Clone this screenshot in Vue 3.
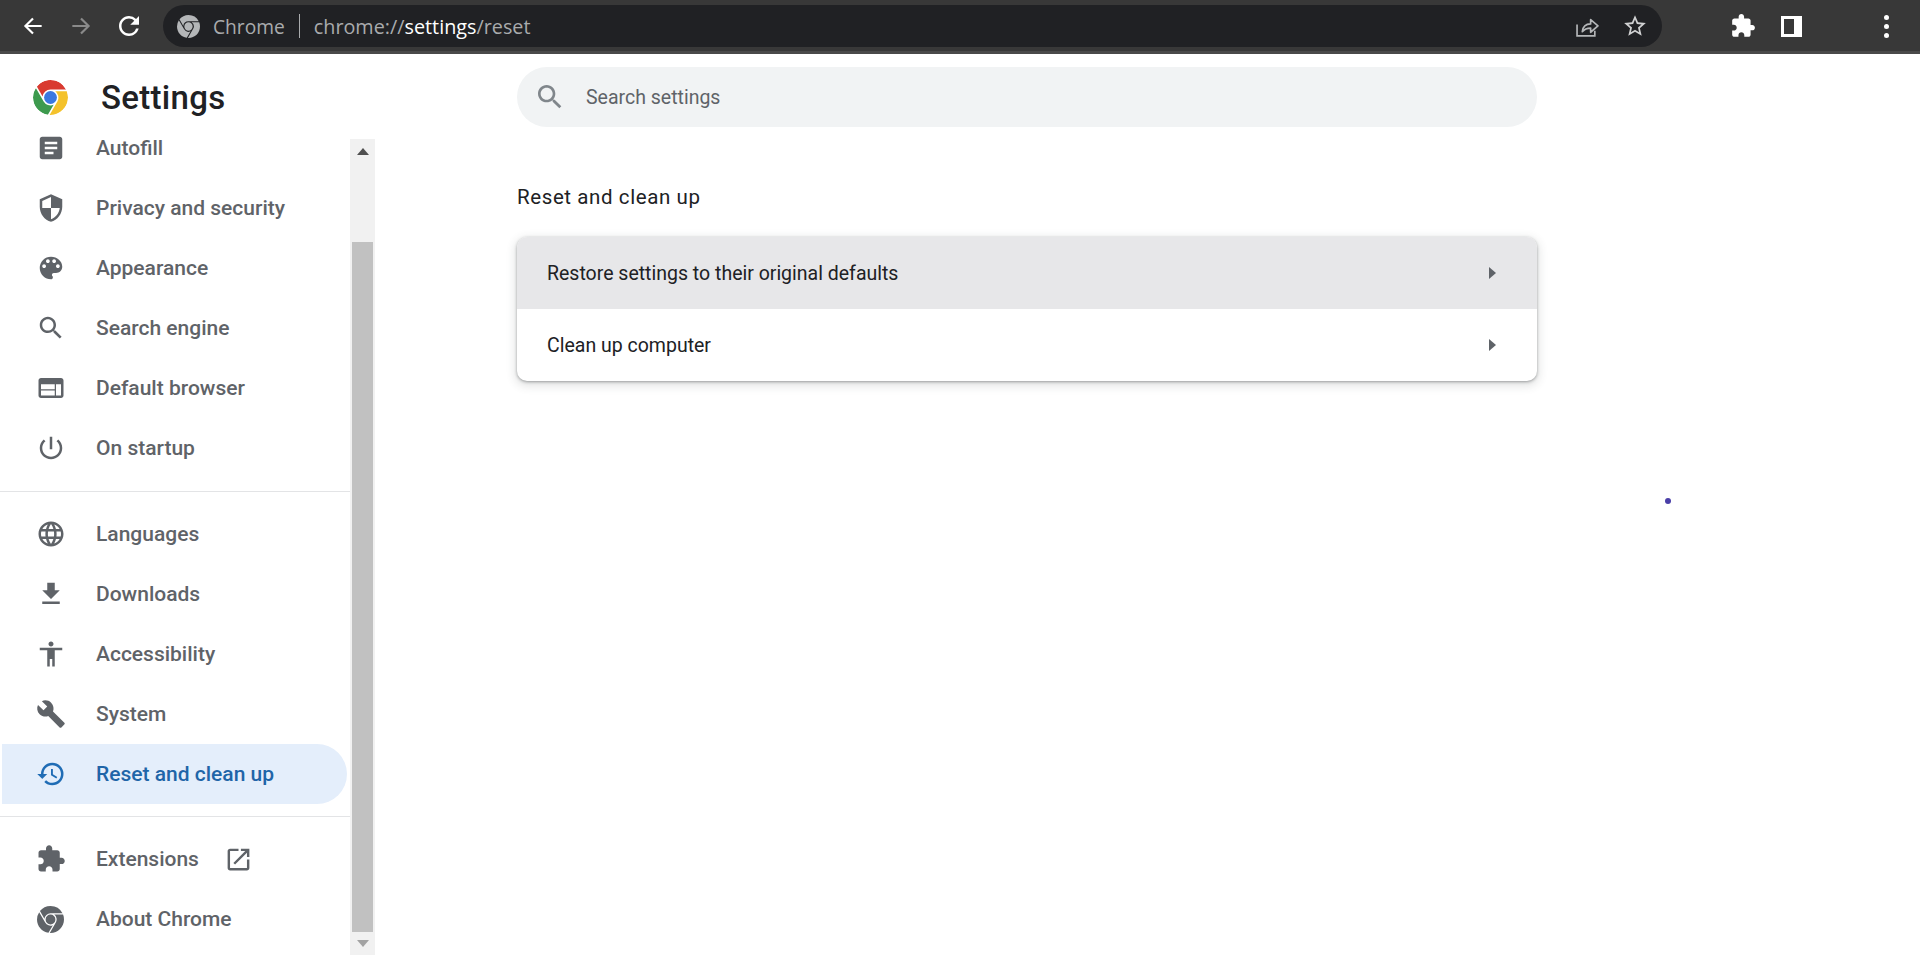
<script setup>
const P = {
  autofill: 'M19 3H5c-1.1 0-2 .9-2 2v14c0 1.1.9 2 2 2h14c1.1 0 2-.9 2-2V5c0-1.1-.9-2-2-2zm-5 14H7v-2h7v2zm3-4H7v-2h10v2zm0-4H7V7h10v2z',
  shield: 'M12 1L3 5v6c0 5.55 3.84 10.74 9 12 5.16-1.26 9-6.45 9-12V5l-9-4zm0 10.99h7c-.53 4.12-3.28 7.79-7 8.94V12H5V6.3l7-3.11v8.8z',
  palette: 'M12 3a9 9 0 0 0 0 18c.83 0 1.5-.67 1.5-1.5 0-.39-.15-.74-.39-1.01-.23-.26-.38-.61-.38-.99 0-.83.67-1.5 1.5-1.5H16c2.76 0 5-2.24 5-5 0-4.42-4.03-8-9-8zm-5.5 9c-.83 0-1.5-.67-1.5-1.5S5.67 9 6.5 9 8 9.67 8 10.5 7.33 12 6.5 12zm3-4C8.67 8 8 7.33 8 6.5S8.67 5 9.5 5s1.5.67 1.5 1.5S10.33 8 9.5 8zm5 0c-.83 0-1.5-.67-1.5-1.5S13.67 5 14.5 5s1.5.67 1.5 1.5S15.33 8 14.5 8zm3 4c-.83 0-1.5-.67-1.5-1.5S16.67 9 17.5 9s1.5.67 1.5 1.5-.67 1.5-1.5 1.5z',
  search: 'M15.5 14h-.79l-.28-.27C15.41 12.59 16 11.11 16 9.5 16 5.91 13.09 3 9.5 3S3 5.91 3 9.5 5.91 16 9.5 16c1.61 0 3.09-.59 4.23-1.57l.27.28v.79l5 4.99L20.49 19l-4.99-5zm-6 0C7.01 14 5 11.99 5 9.5S7.01 5 9.5 5 14 7.01 14 9.5 11.99 14 9.5 14z',
  web: 'M20 4H4c-1.1 0-1.99.9-1.99 2L2 18c0 1.1.9 2 2 2h16c1.1 0 2-.9 2-2V6c0-1.1-.9-2-2-2zm-5 14H4v-4h11v4zm0-5H4V9h11v4zm5 5h-4V9h4v9z',
  power: 'M13 3h-2v10h2V3zm4.83 2.17l-1.42 1.42C17.99 7.86 19 9.81 19 12c0 3.87-3.13 7-7 7s-7-3.13-7-7c0-2.19 1.01-4.14 2.58-5.42L6.17 5.17C4.23 6.82 3 9.26 3 12c0 4.97 4.03 9 9 9s9-4.03 9-9c0-2.74-1.23-5.18-3.17-6.83z',
  language: 'M11.99 2C6.47 2 2 6.48 2 12s4.47 10 9.99 10C17.52 22 22 17.52 22 12S17.52 2 11.99 2zm6.93 6h-2.95c-.32-1.25-.78-2.45-1.38-3.56 1.84.63 3.37 1.91 4.33 3.56zM12 4.04c.83 1.2 1.48 2.53 1.91 3.96h-3.82c.43-1.43 1.08-2.76 1.91-3.96zM4.26 14C4.1 13.36 4 12.69 4 12s.1-1.36.26-2h3.38c-.08.66-.14 1.32-.14 2 0 .68.06 1.34.14 2H4.26zm.82 2h2.95c.32 1.25.78 2.45 1.38 3.56-1.84-.63-3.37-1.9-4.33-3.56zm2.95-8H5.08c.96-1.66 2.49-2.93 4.33-3.56C8.81 5.55 8.35 6.75 8.03 8zM12 19.96c-.83-1.2-1.48-2.53-1.91-3.96h3.82c-.43 1.43-1.08 2.76-1.91 3.96zM14.34 14H9.66c-.09-.66-.16-1.32-.16-2 0-.68.07-1.35.16-2h4.68c.09.65.16 1.32.16 2 0 .68-.07 1.34-.16 2zm.25 5.56c.6-1.11 1.06-2.31 1.38-3.56h2.95c-.96 1.65-2.49 2.93-4.33 3.56zM16.36 14c.08-.66.14-1.32.14-2 0-.68-.06-1.34-.14-2h3.38c.16.64.26 1.31.26 2s-.1 1.36-.26 2h-3.38z',
  download: 'M19 9h-4V3H9v6H5l7 7 7-7zM5 18v2h14v-2H5z',
  access: 'M12 2c1.1 0 2 .9 2 2s-.9 2-2 2-2-.9-2-2 .9-2 2-2zm9 7h-6v13h-2v-6h-2v6H9V9H3V7h18v2z',
  build: 'M22.7 19l-9.1-9.1c.9-2.3.4-5-1.5-6.9-2-2-5-2.4-7.4-1.3L9 6 6 9 1.6 4.7C.4 7.1.9 10.1 2.9 12.1c1.9 1.9 4.6 2.4 6.9 1.5l9.1 9.1c.4.4 1 .4 1.4 0l2.3-2.3c.5-.4.5-1.1.1-1.4z',
  history: 'M13 3a9 9 0 0 0-9 9H1l3.89 3.89.07.14L9 12H6c0-3.87 3.13-7 7-7s7 3.13 7 7-3.13 7-7 7c-1.93 0-3.68-.79-4.94-2.06l-1.42 1.42A8.954 8.954 0 0 0 13 21a9 9 0 0 0 0-18zm-1 5v5l4.28 2.54.72-1.21-3.5-2.08V8H12z',
  extension: 'M20.5 11H19V7c0-1.1-.9-2-2-2h-4V3.5C13 2.12 11.88 1 10.5 1S8 2.12 8 3.5V5H4c-1.1 0-1.99.9-1.99 2v3.8H3.5c1.49 0 2.7 1.21 2.7 2.7s-1.21 2.7-2.7 2.7H2V20c0 1.1.9 2 2 2h3.8v-1.5c0-1.49 1.21-2.7 2.7-2.7 1.49 0 2.7 1.21 2.7 2.7V22H17c1.1 0 2-.9 2-2v-4h1.5c1.38 0 2.5-1.12 2.5-2.5S21.88 11 20.5 11z',
  open: 'M19 19H5V5h7V3H5c-1.11 0-2 .9-2 2v14c0 1.1.89 2 2 2h14c1.1 0 2-.9 2-2v-7h-2v7zM14 3v2h3.59l-9.83 9.83 1.41 1.41L19 6.41V10h2V3h-7z',
  star: 'M22 9.24l-7.19-.62L12 2 9.19 8.63 2 9.24l5.46 4.73L5.82 21 12 17.27 18.18 21l-1.63-7.03L22 9.24zM12 15.4l-3.76 2.27 1-4.28-3.32-2.88 4.38-.38L12 6.1l1.71 4.04 4.38.38-3.32 2.88 1 4.28L12 15.4z',
  chrome: 'M12 0C8.21 0 4.831 1.757 2.632 4.501l3.953 6.848A5.454 5.454 0 0 1 12 6.545h10.691A12 12 0 0 0 12 0zM1.931 5.47A11.943 11.943 0 0 0 0 12c0 6.012 4.42 10.991 10.189 11.864l3.953-6.847a5.45 5.45 0 0 1-6.865-2.29zm13.342 2.166a5.446 5.446 0 0 1 1.45 7.09l.002.001h-.002l-5.344 9.257c.206.01.413.016.621.016 6.627 0 12-5.373 12-12 0-1.54-.29-3.011-.818-4.364zM12 16.364a4.364 4.364 0 1 1 0-8.728 4.364 4.364 0 0 1 0 8.728Z'
}
const groupA = [
  { label: 'Autofill', icon: P.autofill },
  { label: 'Privacy and security', icon: P.shield },
  { label: 'Appearance', icon: P.palette },
  { label: 'Search engine', icon: P.search },
  { label: 'Default browser', icon: P.web },
  { label: 'On startup', icon: P.power }
]
const groupB = [
  { label: 'Languages', icon: P.language },
  { label: 'Downloads', icon: P.download },
  { label: 'Accessibility', icon: P.access },
  { label: 'System', icon: P.build },
  { label: 'Reset and clean up', icon: P.history, active: true }
]
const rows = ['Restore settings to their original defaults', 'Clean up computer']
</script>

<template>
  <div class="page">
    <header class="toolbar">
      <div class="nav-btns">
        <svg class="tb-arrow" viewBox="0 0 24 24"><path d="M20 12H5M12 5l-7 7 7 7" fill="none" stroke="#fff" stroke-width="2"/></svg>
        <svg class="tb-arrow" viewBox="0 0 24 24"><path d="M4 12h15M12 5l7 7-7 7" fill="none" stroke="#8a8a8a" stroke-width="2"/></svg>
        <svg class="tb-reload" viewBox="0 0 24 24"><path d="M17.65 6.35A7.958 7.958 0 0 0 12 4c-4.42 0-7.99 3.58-7.99 8s3.57 8 7.99 8c3.73 0 6.84-2.55 7.73-6h-2.08A5.99 5.99 0 0 1 12 18c-3.31 0-6-2.69-6-6s2.69-6 6-6c1.66 0 3.14.69 4.22 1.78L13 11h7V4l-2.35 2.35z" fill="#fff"/></svg>
      </div>
      <div class="omnibox">
        <svg class="omni-chrome" viewBox="0 0 24 24"><path :d="P.chrome" fill="#b4b6b8"/></svg>
        <span class="omni-site">Chrome</span>
        <span class="omni-div"></span>
        <span class="omni-url">chrome://<b>settings</b>/reset</span>
        <span class="omni-spacer"></span>
        <svg class="omni-share" viewBox="0 0 22 20"><path d="M1 8v11h17v-5" fill="none" stroke="#b4b6b8" stroke-width="1.6"/><path d="M6 15c.5-4.5 3.5-7.5 8-7.5V3.5l7 6-7 6v-4c-3.5 0-6 1-8 3.500z" fill="none" stroke="#b4b6b8" stroke-width="1.6" stroke-linejoin="round"/></svg>
        <svg class="omni-star" viewBox="0 0 24 24"><path :d="P.star" fill="#d0d1d2"/></svg>
      </div>
      <div class="tb-right">
        <svg class="tb-ext" viewBox="0 0 24 24"><path :d="P.extension" fill="#fff"/></svg>
        <span class="tb-panel"></span>
        <span class="tb-menu"><i></i><i></i><i></i></span>
      </div>
    </header>

    <div class="body">
      <aside class="sidebar">
        <div class="brand">
          <svg class="logo" viewBox="0 0 24 24">
            <path d="M12 0C8.21 0 4.831 1.757 2.632 4.501l3.953 6.848A5.454 5.454 0 0 1 12 6.545h10.691A12 12 0 0 0 12 0z" fill="#d93a30"/>
            <path d="M1.931 5.47A11.943 11.943 0 0 0 0 12c0 6.012 4.42 10.991 10.189 11.864l3.953-6.847a5.45 5.45 0 0 1-6.865-2.29z" fill="#3d9a4e"/>
            <path d="M15.273 7.636a5.446 5.446 0 0 1 1.45 7.09l.002.001h-.002l-5.344 9.257c.206.01.413.016.621.016 6.627 0 12-5.373 12-12 0-1.54-.29-3.011-.818-4.364z" fill="#f4c22b"/>
            <circle cx="12" cy="12" r="4.4" fill="#3b78e0"/>
          </svg>
          <h1 class="brand-title">Settings</h1>
        </div>
        <div class="side-scroll">
          <nav class="side-nav">
            <a v-for="it in groupA" :key="it.label" class="item">
              <svg class="item-icon" viewBox="0 0 24 24"><path :d="it.icon"/></svg>
              <span>{{ it.label }}</span>
            </a>
            <hr class="sep" />
            <a v-for="it in groupB" :key="it.label" class="item" :class="{ active: it.active }">
              <svg class="item-icon" viewBox="0 0 24 24"><path :d="it.icon"/></svg>
              <span>{{ it.label }}</span>
            </a>
            <hr class="sep" />
            <a class="item">
              <svg class="item-icon" viewBox="0 0 24 24"><path :d="P.extension"/></svg>
              <span>Extensions</span>
              <svg class="ext-open" viewBox="0 0 24 24"><path :d="P.open"/></svg>
            </a>
            <a class="item">
              <svg class="item-icon about" viewBox="0 0 24 24"><path :d="P.chrome"/></svg>
              <span>About Chrome</span>
            </a>
          </nav>
          <div class="scrollbar">
            <span class="sb-up"></span>
            <span class="sb-thumb"></span>
            <span class="sb-down"></span>
          </div>
        </div>
      </aside>

      <main class="main">
        <div class="searchbox">
          <svg class="search-icon" viewBox="0 0 24 24"><path :d="P.search"/></svg>
          <span>Search settings</span>
        </div>
        <h2 class="section-title">Reset and clean up</h2>
        <section class="card">
          <div v-for="(r, i) in rows" :key="r" class="row" :class="{ hover: i === 0 }">
            <span>{{ r }}</span>
            <span class="caret"></span>
          </div>
        </section>
      </main>
      <span class="dot"></span>
    </div>
  </div>
</template>

<style>
html, body { margin: 0; background: #fff; overflow: hidden; }
</style>

<style scoped>
.page { width: 1920px; height: 955px; display: flex; flex-direction: column; font-family: Roboto, "Liberation Sans", sans-serif; background: #fff; overflow: hidden; }

.toolbar { height: 54px; box-sizing: border-box; flex: none; display: flex; align-items: flex-start; background: #383838; border-bottom: 3px solid #4a4a4a; padding-top: 5px; }
.nav-btns { width: 163px; height: 42px; flex: none; display: flex; align-items: center; box-sizing: border-box; padding-left: 20px; gap: 22px; }
.tb-arrow { width: 26px; height: 26px; }
.tb-reload { width: 30px; height: 30px; margin-left: -2px; }
.omnibox { width: 1499px; height: 42px; flex: none; box-sizing: border-box; border-radius: 21px; background: #202124; display: flex; align-items: center; padding-left: 14px; font-family: "Open Sans", "Noto Sans", sans-serif; font-size: 19.2px; color: #a9abad; }
.omni-chrome { width: 23px; height: 23px; flex: none; }
.omni-site { margin-left: 13px; }
.omni-div { width: 1px; height: 24px; background: #a9abad; margin: 0 14px; }
.omni-url { font-size: 19.8px; }
.omni-url b { font-weight: 400; color: #fff; }
.omni-spacer { flex: 1; }
.omni-share { width: 23px; height: 21px; margin-right: 23px; }
.omni-star { width: 26px; height: 26px; margin-right: 14px; }
.tb-right { flex: 1; height: 42px; display: flex; align-items: center; padding-left: 68px; }
.tb-ext { width: 26px; height: 26px; }
.tb-panel { width: 21px; height: 21px; box-sizing: border-box; border: 3px solid #fff; border-right-width: 8px; margin-left: 25px; }
.tb-menu { display: flex; flex-direction: column; gap: 4px; margin-left: 82px; }
.tb-menu i { width: 5px; height: 5px; border-radius: 50%; background: #fff; display: block; }

.body { flex: 1; min-height: 0; display: flex; position: relative; }
.sidebar { width: 375px; flex: none; display: flex; flex-direction: column; }
.brand { flex: none; display: flex; align-items: center; padding: 22px 0 0 33px; height: 42px; }
.logo { width: 35px; height: 35px; flex: none; background: #fff; border-radius: 50%; }
.brand-title { margin: 0 0 0 33px; font-size: 33px; font-weight: 500; color: #202124; letter-spacing: .3px; }
.side-scroll { flex: 1; min-height: 0; display: flex; }
.side-nav { width: 350px; flex: none; }
.item { height: 60px; display: flex; align-items: center; box-sizing: border-box; padding-left: 36px; font-size: 21px; font-weight: 500; color: #5f6368; }
.item-icon { width: 30px; height: 30px; fill: #5f6368; flex: none; margin-right: 30px; }
.item-icon.about { width: 27px; height: 27px; margin-left: 1px; margin-right: 32px; }
.item.active { color: #1f65a8; background: #e4eefb; margin: 0 3px 0 2px; padding-left: 34px; border-radius: 0 30px 30px 0; }
.item.active .item-icon { fill: #1f6cb5; }
.ext-open { width: 29px; height: 29px; fill: #5f6368; margin-left: 25px; }
.sep { height: 1px; border: 0; background: #e3e4e6; margin: 13px 0 12px; }
.sep ~ .sep { margin: 12px 0 12px; }
.scrollbar { width: 25px; flex: none; margin-top: 21px; background: #f1f1f1; display: flex; flex-direction: column; align-items: center; }
.sb-up { flex: none; margin-top: 9px; border: 6px solid transparent; border-top: 0; border-bottom: 7px solid #505050; }
.sb-thumb { flex: 1; width: 21px; background: #c1c1c1; margin: 87px 0 0; }
.sb-down { flex: none; margin: 8px 0 8px; border: 6px solid transparent; border-bottom: 0; border-top: 7px solid #a3a3a3; }

.main { flex: 1; box-sizing: border-box; padding: 13px 0 0 142px; }
.searchbox { width: 1020px; height: 60px; box-sizing: border-box; border-radius: 30px; background: #f1f3f4; display: flex; align-items: center; padding-left: 17px; font-size: 19.5px; color: #5f6368; }
.search-icon { width: 32px; height: 32px; fill: #80868b; margin-right: 20px; }
.section-title { margin: 58px 0 0; font-size: 20.5px; line-height: 24px; font-weight: 400; letter-spacing: .6px; color: #202124; }
.card { width: 1020px; margin-top: 28px; border-radius: 10px; overflow: hidden; background: #fff; box-shadow: 0 1px 3px rgba(60,64,67,.45), 0 3px 10px 2px rgba(60,64,67,.14); }
.row { height: 72px; display: flex; align-items: center; justify-content: space-between; padding: 0 41px 0 30px; font-size: 19.5px; color: #202124; }
.row.hover { background: #e7e7e9; }
.caret { border: 6px solid transparent; border-right: 0; border-left: 7px solid #5f6368; }
.dot { position: absolute; left: 1665px; top: 444px; width: 6px; height: 6px; border-radius: 50%; background: #4a3fa8; }
</style>
